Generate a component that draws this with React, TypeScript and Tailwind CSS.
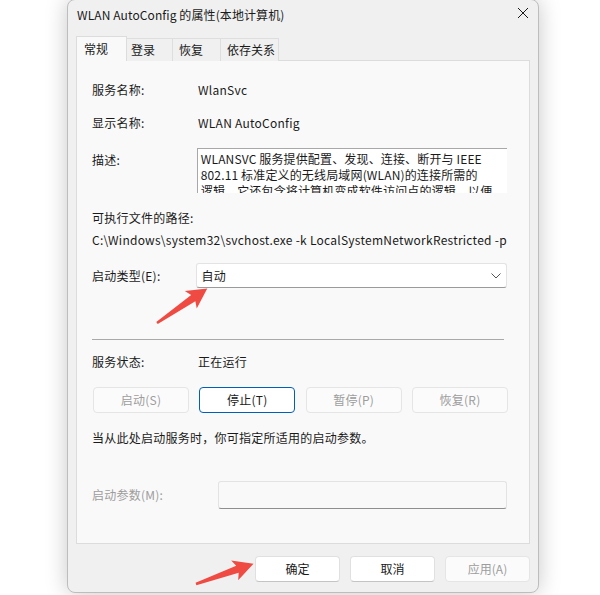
import React from "react";

const font = "font-['Segoe_UI','Noto_Sans_CJK_SC',sans-serif]";

function Arrow({ x, y, angle, len }: { x: number; y: number; angle: number; len: number }) {
  const L = len;
  const pts = `0,-1.3 ${L - 17},-3.7 ${L - 20},-10.5 ${L},0 ${L - 20},10.5 ${L - 17},3.7 0,1.3`;
  return (
    <g transform={`translate(${x} ${y}) rotate(${angle})`}>
      <polygon points={pts} fill="#ef4b43" />
    </g>
  );
}

function Btn({ children, disabled, focused, w = "w-[96px]" }: { children: React.ReactNode; disabled?: boolean; focused?: boolean; w?: string }) {
  const base = `h-[26px] ${w} rounded-[4px] flex items-center justify-center text-[12px]`;
  if (disabled)
    return <div className={`${base} bg-[#fbfbfb] border border-[#e5e5e5] text-[#9d9d9d]`}>{children}</div>;
  if (focused)
    return <div className={`${base} bg-white border border-[#005fb8] text-[#1a1a1a]`}>{children}</div>;
  return (
    <div className={`${base} bg-white border border-[#e0e0e0] border-b-[#c4c4c4] text-[#1a1a1a]`}>{children}</div>
  );
}

export default function App() {
  return (
    <div className={`relative w-[600px] h-[595px] bg-white overflow-hidden ${font} text-[#1a1a1a]`}>
      <div className="ml-[67px] w-[472px] h-[594px] -mt-[1px] bg-[#f0f0f0] rounded-[8px] border border-[#bdbdbd] shadow-[0_0_22px_rgba(0,0,0,0.22)] flex flex-col">
        {/* title bar */}
        <div className="h-[29px] flex items-center justify-between pl-[9px] pr-[9px] pt-[1px]">
          <span className="text-[12px] tracking-[0.1px]">WLAN AutoConfig 的属性(本地计算机)</span>
          <svg width="12" height="12" viewBox="0 0 12 12" className="mb-[4px]">
            <path d="M1 1 L11 11 M11 1 L1 11" stroke="#1a1a1a" strokeWidth="1" />
          </svg>
        </div>
        {/* tabs */}
        <div className="ml-[8px] mt-[7px] flex items-end h-[25px] relative z-10">
          <div className="w-[51px] h-[25px] bg-[#f9f9f9] border border-[#dcdcdc] border-b-0 flex items-center pl-[7px] text-[12px]">常规</div>
          <div className="w-[46px] h-[23px] bg-[#f0f0f0] border border-l-0 border-[#dedede] border-b-0 flex items-center pl-[4px] text-[12px]">登录</div>
          <div className="w-[48px] h-[23px] bg-[#f0f0f0] border border-l-0 border-[#dedede] border-b-0 flex items-center pl-[6px] text-[12px]">恢复</div>
          <div className="w-[58px] h-[23px] bg-[#f0f0f0] border border-l-0 border-[#dedede] border-b-0 flex items-center pl-[6px] text-[12px]">依存关系</div>
        </div>
        {/* panel */}
        <div className="ml-[8px] w-[454px] h-[484px] bg-[#f9f9f9] border border-[#dcdcdc] -mt-[1px] pl-[15px] pr-[22px] pt-[21px] text-[12px] tracking-[0.25px]">
          <div className="flex h-[16px] items-center">
            <div className="w-[106px]">服务名称:</div>
            <div>WlanSvc</div>
          </div>
          <div className="flex h-[16px] items-center mt-[17px]">
            <div className="w-[106px]">显示名称:</div>
            <div>WLAN AutoConfig</div>
          </div>
          <div className="flex mt-[17px]">
            <div className="w-[105px] mt-[4px] leading-[16px]">描述:</div>
            <div className="w-[311px] h-[45px] bg-white border-t border-l border-[#a8a8a8] overflow-hidden pl-[3px] pt-[2px] leading-[16px] tracking-[0.15px] whitespace-nowrap">
              <div>WLANSVC 服务提供配置、发现、连接、断开与 IEEE</div>
              <div>802.11 标准定义的无线局域网(WLAN)的连接所需的</div>
              <div>逻辑。它还包含将计算机变成软件访问点的逻辑，以便</div>
              <div>其他设备或计算机可以使用支持它的 WLAN 适配器无线连接到计算机。</div>
            </div>
          </div>
          <div className="h-[16px] flex items-center mt-[17px]">可执行文件的路径:</div>
          <div className="h-[16px] flex items-center mt-[6px] whitespace-nowrap">C:\Windows\system32\svchost.exe -k LocalSystemNetworkRestricted -p</div>
          <div className="flex items-center mt-[15px]">
            <div className="w-[105px]">启动类型(E):</div>
            <div className="w-[312px] h-[25px] bg-white border border-[#e3e3e3] border-b-[#9a9a9a] rounded-[3px] flex items-center justify-between pl-[4px] pr-[5px]">
              <span>自动</span>
              <svg width="10" height="6" viewBox="0 0 10 6">
                <path d="M0.5 0.5 L5 5 L9.5 0.5" fill="none" stroke="#555" strokeWidth="1" />
              </svg>
            </div>
          </div>
          <div className="mt-[51px] h-px bg-[#a9a9a9] w-[412px]" />
          <div className="flex h-[16px] items-center mt-[14px]">
            <div className="w-[106px]">服务状态:</div>
            <div>正在运行</div>
          </div>
          <div className="flex justify-between mt-[17px] ml-[1px] w-[415px]">
            <Btn disabled>启动(S)</Btn>
            <Btn focused>停止(T)</Btn>
            <Btn disabled>暂停(P)</Btn>
            <Btn disabled>恢复(R)</Btn>
          </div>
          <div className="h-[16px] flex items-center mt-[17px]">当从此处启动服务时，你可指定所适用的启动参数。</div>
          <div className="flex items-center mt-[35px]">
            <div className="w-[127px] text-[#9d9d9d]">启动参数(M):</div>
            <div className="w-[290px] h-[28px] bg-[#f9f9f9] border border-[#e3e3e3] border-b-[#8e8e8e] rounded-[3px]" />
          </div>
        </div>
        {/* bottom buttons */}
        <div className="flex justify-end gap-[10px] mr-[8px] mt-[12px]">
          <Btn w="w-[85px]">确定</Btn>
          <Btn w="w-[85px]">取消</Btn>
          <Btn w="w-[85px]" disabled>应用(A)</Btn>
        </div>
      </div>
      <svg className="absolute inset-0 pointer-events-none" width="600" height="595">
        <Arrow x={157} y={323} angle={-34.5} len={61} />
        <Arrow x={196} y={584} angle={-19.5} len={61} />
      </svg>
    </div>
  );
}
